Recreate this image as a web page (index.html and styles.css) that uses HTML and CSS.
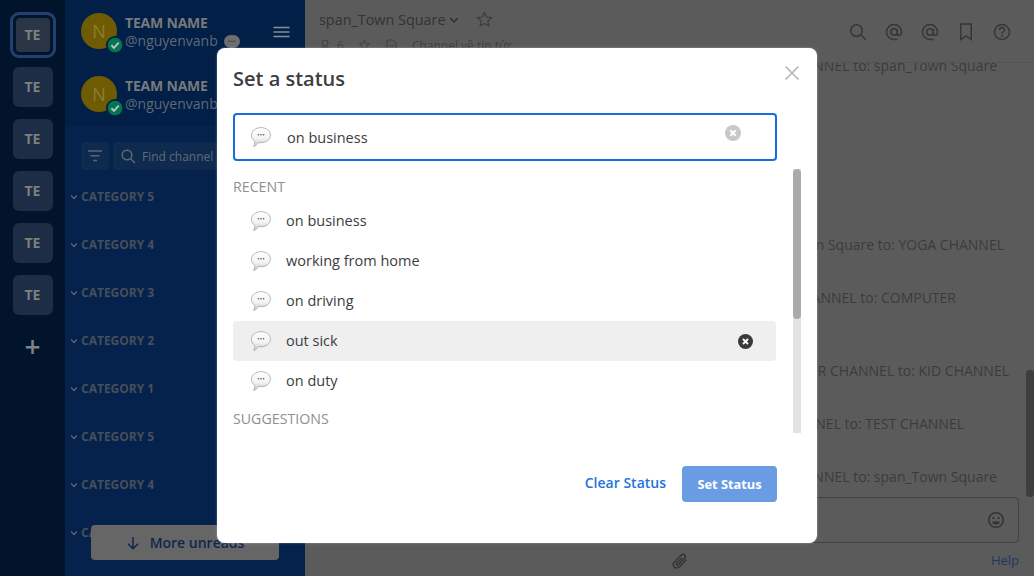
FILE: index.html
```html
<!DOCTYPE html>
<html lang="en">
<head>
<meta charset="utf-8">
<title>Set a status</title>
<link rel="stylesheet" href="styles.css">
</head>
<body>
<svg class="defs" width="0" height="0" aria-hidden="true">
  <defs>
    <linearGradient id="bub" x1="0" y1="0" x2="0" y2="1"><stop offset="0" stop-color="#fff"/><stop offset=".55" stop-color="#f4f4f4"/><stop offset="1" stop-color="#c4c4c4"/></linearGradient>
    <symbol id="bubble" viewBox="0 0 20 20">
      <path d="M10 .6c5.300 0 9.500 3.300 9.500 7.600s-4.200 7.600-9.500 7.600c-.9 0-1.700-.1-2.500-.3C6.400 17.400 4.500 19 2.600 19.500c.8-1.300 1.200-3 1.100-5C1.800 13.100.5 10.800.5 8.200.5 3.900 4.700.6 10 .6z" fill="url(#bub)" stroke="#a8a8a8" stroke-width=".8"/>
      <circle cx="7.400" cy="7.700" r=".8" fill="#555"/><circle cx="10" cy="7.700" r=".8" fill="#555"/><circle cx="12.600" cy="7.700" r=".8" fill="#555"/>
    </symbol>
    <symbol id="check" viewBox="0 0 16 16">
      <circle cx="8" cy="8" r="6.500" fill="#04764f"/>
      <path d="M4.800 8.200l2.300 2.300 4.200-4.600" fill="none" stroke="#b9c3c4" stroke-width="1.700"/>
    </symbol>
    <symbol id="chev" viewBox="0 0 8 8"><path d="M1 2.500l3 3 3-3" fill="none" stroke="currentColor" stroke-width="1.300"/></symbol>
    <symbol id="at" viewBox="0 0 18 18"><path d="M12.200 9a3.200 3.200 0 1 1-6.400 0 3.200 3.200 0 0 1 6.400 0zm0-3v4.400c0 1.200.8 1.900 1.900 1.900 1.500 0 2.400-1.500 2.400-3.300A7.500 7.500 0 1 0 9 16.500h3.500" fill="none" stroke="currentColor" stroke-width="1.500"/></symbol>
  </defs>
</svg>

<div class="app">
  <nav class="rail">
    <div class="team team-active"><span class="team-tile">TE</span></div>
    <div class="team"><span class="team-tile">TE</span></div>
    <div class="team"><span class="team-tile">TE</span></div>
    <div class="team"><span class="team-tile">TE</span></div>
    <div class="team"><span class="team-tile">TE</span></div>
    <div class="team"><span class="team-tile">TE</span></div>
    <div class="team-add">+</div>
  </nav>

  <aside class="sidebar">
    <header class="side-head">
      <div class="profile">
        <div class="avatar">N<svg class="badge"><use href="#check"/></svg></div>
        <div class="who">
          <div class="team-name">TEAM NAME</div>
          <div class="handle">@nguyenvanb <span class="status-dot">···</span></div>
        </div>
        <svg class="burger" width="18" height="12" viewBox="0 0 18 12"><path d="M.5 1.500h16M.5 6h16M.5 10.500h16" stroke="#8b8f93" stroke-width="1.500"/></svg>
      </div>
      <div class="profile">
        <div class="avatar">N<svg class="badge"><use href="#check"/></svg></div>
        <div class="who">
          <div class="team-name">TEAM NAME</div>
          <div class="handle">@nguyenvanb</div>
        </div>
      </div>
    </header>
    <div class="tools">
      <div class="filter"><svg width="16" height="12" viewBox="0 0 16 12"><path d="M1 1h14M3.500 5.800h9M6 10.500h4" stroke="#5b6573" stroke-width="1.400"/></svg></div>
      <div class="find"><svg width="15" height="15" viewBox="0 0 15 15"><circle cx="6" cy="6" r="4.800" fill="none" stroke="#5f6873" stroke-width="1.500"/><path d="M9.500 9.500l4.500 4.500" stroke="#5f6873" stroke-width="1.500"/></svg><span>Find channel</span></div>
    </div>
    <ul class="cats">
      <li class="cat"><svg class="cat-chev"><use href="#chev"/></svg>CATEGORY 5</li>
      <li class="cat"><svg class="cat-chev"><use href="#chev"/></svg>CATEGORY 4</li>
      <li class="cat"><svg class="cat-chev"><use href="#chev"/></svg>CATEGORY 3</li>
      <li class="cat"><svg class="cat-chev"><use href="#chev"/></svg>CATEGORY 2</li>
      <li class="cat"><svg class="cat-chev"><use href="#chev"/></svg>CATEGORY 1</li>
      <li class="cat"><svg class="cat-chev"><use href="#chev"/></svg>CATEGORY 5</li>
      <li class="cat"><svg class="cat-chev"><use href="#chev"/></svg>CATEGORY 4</li>
      <li class="cat"><svg class="cat-chev"><use href="#chev"/></svg>CATEGORY 3</li>
    </ul>
    <div class="more"><svg width="14" height="14" viewBox="0 0 14 14"><path d="M7 1v11.500M2 7.800l5 5 5-5" fill="none" stroke="#10264d" stroke-width="1.500"/></svg><span>More unreads</span></div>
  </aside>

  <main class="center">
    <header class="chan-head">
      <div class="chan-info">
        <div class="chan-title">
          <span>span_Town Square</span>
          <svg class="chan-chev"><use href="#chev"/></svg>
          <svg class="chan-star" width="17" height="17" viewBox="0 0 17 17"><path d="M8.500 1.500l2.100 4.500 4.900.6-3.600 3.400.9 4.900-4.300-2.400-4.300 2.400.9-4.900L1.500 6.600l4.900-.6z" fill="none" stroke="#3c3c3c" stroke-width="1.200"/></svg>
        </div>
        <div class="chan-sub">
          <svg width="12" height="13" viewBox="0 0 12 13"><circle cx="6" cy="4" r="3" fill="none" stroke="#3f3f3f"/><path d="M1 12c0-3 2-4 5-4s5 1 5 4z" fill="none" stroke="#3f3f3f"/></svg>
          <span class="count">6</span>
          <svg class="sub-pin" width="13" height="13" viewBox="0 0 13 13"><path d="M6.500 1l1.500 3.500 3.500.4-2.600 2.400.7 3.700-3.100-1.900-3.100 1.900.7-3.700L1.500 4.900 5 4.500z" fill="none" stroke="#3f3f3f"/></svg>
          <svg class="sub-doc" width="11" height="13" viewBox="0 0 11 13"><path d="M1 1h6l3 3v8H1zM3 7h5M3 9.500h5" fill="none" stroke="#3f3f3f"/></svg>
          <span class="purpose">Channel về tin tức</span>
        </div>
      </div>
      <div class="chan-icons">
        <svg width="18" height="18" viewBox="0 0 18 18"><circle cx="7.500" cy="7.500" r="5.800" fill="none" stroke="currentColor" stroke-width="1.500"/><path d="M11.800 11.800l5 5" stroke="currentColor" stroke-width="1.500"/></svg>
        <svg width="18" height="18"><use href="#at"/></svg>
        <svg width="18" height="18"><use href="#at"/></svg>
        <svg width="18" height="18" viewBox="0 0 18 18"><path d="M3.800 1h10.400v15.500L9 12.800l-5.200 3.700z" fill="none" stroke="currentColor" stroke-width="1.500"/></svg>
        <svg width="18" height="18" viewBox="0 0 18 18"><circle cx="9" cy="9" r="7.500" fill="none" stroke="currentColor" stroke-width="1.500"/><path d="M6.500 7c0-1.600 1.100-2.500 2.500-2.500s2.500.9 2.500 2.300c0 1.900-2.500 2-2.500 3.900" fill="none" stroke="currentColor" stroke-width="1.500"/><circle cx="9" cy="13" r="1" fill="currentColor"/></svg>
      </div>
    </header>
    <div class="posts">
      <div class="scroll-thumb"></div>
      <p class="post p1">YOGA CHANNEL to: span_Town Square</p>
      <p class="post p2">span_Town Square to: YOGA CHANNEL</p>
      <p class="post p3">YOGA CHANNEL to: COMPUTER</p>
      <p class="post p4">COMPUTER CHANNEL to: KID CHANNEL</p>
      <p class="post p5">KID CHANNEL to: TEST CHANNEL</p>
      <p class="post p6">CHANNEL to: span_Town Square</p>
    </div>
    <div class="composer">
      <svg width="18" height="18" viewBox="0 0 18 18"><circle cx="9" cy="9" r="7.300" fill="none" stroke="#333" stroke-width="1.500"/><circle cx="6.300" cy="7" r="1.100" fill="#333"/><circle cx="11.700" cy="7" r="1.100" fill="#333"/><path d="M5 10.500h8c-.5 2-2 3-4 3s-3.500-1-4-3z" fill="#333"/></svg>
    </div>
    <div class="under">
      <svg class="clip" width="18" height="18" viewBox="0 0 18 18"><path d="M15.500 7.500l-7 7.200c-1.600 1.600-4 1.600-5.300.2-1.400-1.400-1.300-3.500.2-5l6.800-6.800c1-1 2.500-1 3.400-.1.900.9.900 2.400-.1 3.400l-6.300 6.300c-.5.500-1.200.5-1.600.1-.4-.4-.4-1.100.1-1.600l5.500-5.500" fill="none" stroke="#333" stroke-width="1.400"/></svg>
      <span class="help">Help</span>
    </div>
  </main>
</div>

<div class="overlay">
  <section class="modal">
    <header class="modal-head">
      <h1>Set a status</h1>
      <svg class="close" width="16" height="16" viewBox="0 0 16 16"><path d="M1.500 1.500l13 13M14.500 1.500l-13 13" stroke="#b5b5b5" stroke-width="1.600"/></svg>
    </header>
    <div class="field">
      <svg class="emoji"><use href="#bubble"/></svg>
      <span class="field-text">on business</span>
      <svg class="clear clear-field" viewBox="0 0 16 16"><circle cx="8" cy="8" r="8" fill="#c8c8c8"/><path d="M5.300 5.300l5.400 5.400M10.700 5.300l-5.400 5.400" stroke="#fff" stroke-width="2"/></svg>
    </div>
    <div class="list-wrap">
      <div class="list">
        <div class="group">Recent</div>
        <div class="row"><svg class="emoji"><use href="#bubble"/></svg><span>on business</span></div>
        <div class="row"><svg class="emoji"><use href="#bubble"/></svg><span>working from home</span></div>
        <div class="row"><svg class="emoji"><use href="#bubble"/></svg><span>on driving</span></div>
        <div class="row row-hover"><svg class="emoji"><use href="#bubble"/></svg><span>out sick</span><svg class="clear clear-row" viewBox="0 0 16 16"><circle cx="8" cy="8" r="8" fill="#3a3a3c"/><path d="M5.300 5.300l5.400 5.400M10.700 5.300l-5.400 5.400" stroke="#fff" stroke-width="2"/></svg></div>
        <div class="row"><svg class="emoji"><use href="#bubble"/></svg><span>on duty</span></div>
        <div class="group group-next">Suggestions</div>
      </div>
      <div class="track"><div class="thumb"></div></div>
    </div>
    <footer class="modal-foot">
      <span class="link">Clear Status</span>
      <span class="btn">Set Status</span>
    </footer>
  </section>
</div>
</body>
</html>
```

FILE: styles.css
```css
* { box-sizing: border-box; }
html, body { margin: 0; height: 100%; overflow: hidden; }
body { font-family: "Open Sans", "Liberation Sans", sans-serif; font-size: 14px; color: #3a3a3a; background: #5b5b5b; position: relative; }
.defs { position: absolute; }
.app { display: flex; width: 1034px; height: 576px; }

/* team rail */
.rail { width: 65px; flex: none; background: #02142b; display: flex; flex-direction: column; align-items: center; padding-top: 15px; gap: 12px; }
.team { width: 40px; height: 40px; display: flex; align-items: center; justify-content: center; position: relative; }
.team-tile { width: 40px; height: 40px; padding-bottom: 2px; background: #1d2d45; border-radius: 6px; color: #7f7f7c; font-weight: 700; font-size: 14px; display: flex; align-items: center; justify-content: center; }
.team-active { width: 46px; height: 46px; margin: -3px 0; border: 3px solid #21426e; border-radius: 9px; }
.team-active .team-tile { width: 34px; height: 34px; background: #2a3645; border-radius: 4px; }
.team-add { color: #7c838d; font-size: 28px; line-height: 36px; font-weight: 600; margin-top: 1px; }

/* sidebar */
.sidebar { width: 240px; flex: none; background: #04224b; position: relative; display: flex; flex-direction: column; }
.side-head { height: 126px; background: #021f47; padding: 13px 0 0 16px; display: flex; flex-direction: column; gap: 27px; }
.profile { display: flex; align-items: flex-start; height: 36px; position: relative; }
.avatar { width: 36px; height: 36px; border-radius: 50%; background: #6f5b02; color: #8d7c31; font-size: 18px; display: flex; align-items: center; justify-content: center; position: relative; flex: none; }
.badge { position: absolute; right: -7px; bottom: -5px; width: 18px; height: 18px; background: #021f47; border-radius: 50%; }
.who { margin-left: 8px; white-space: nowrap; }
.team-name { color: #77797c; font-weight: 700; font-size: 14px; line-height: 20px; letter-spacing: -.2px; }
.handle { color: #5f6a78; font-size: 14px; line-height: 20px; margin-top: -2px; display: flex; align-items: center; gap: 6px; }
.status-dot { width: 16px; height: 13px; border-radius: 8px; background: #6e6e6e; color: #333; font-size: 9px; line-height: 12px; text-align: center; display: inline-block; font-weight: 700; }
.burger { position: absolute; left: 192px; top: 13px; }
.tools { display: flex; gap: 4px; padding: 16px 0 0 16px; height: 44px; }
.filter { width: 28px; height: 28px; background: #0f2a4f; border-radius: 4px; display: flex; align-items: center; justify-content: center; }
.find { width: 130px; height: 28px; background: #0f2a4f; border-radius: 4px; display: flex; align-items: center; gap: 6px; padding-left: 8px; color: #606a76; font-size: 12px; white-space: nowrap; }
.cats { list-style: none; margin: 15px 0 0; padding: 0; }
.cat { height: 48px; line-height: 24px; padding-left: 5px; color: #474f5b; font-size: 12px; font-weight: 700; display: flex; align-items: flex-start; gap: 3px; white-space: nowrap; }
.cat-chev { width: 8px; height: 8px; color: #5b6573; margin-top: 8px; flex: none; }
.more { position: absolute; left: 26px; top: 525px; width: 188px; height: 35px; background: #666; border-radius: 4px; display: flex; align-items: center; justify-content: center; gap: 10px; color: #10264d; font-size: 14px; font-weight: 600; }

/* center */
.center { flex: 1; min-width: 0; background: #5b5b5b; display: flex; flex-direction: column; position: relative; }
.chan-head { height: 63px; border-bottom: 1px solid #535353; display: flex; justify-content: space-between; padding: 9px 23px 0 14px; flex: none; }
.chan-title { display: flex; align-items: center; height: 21px; font-size: 14.4px; color: #333; white-space: nowrap; }
.chan-chev { width: 10px; height: 10px; margin-left: 3px; color: #333; }
.chan-star { margin-left: 17px; }
.chan-sub { display: flex; align-items: center; height: 20px; margin-top: 5px; color: #3f3f3f; font-size: 12px; white-space: nowrap; }
.count { margin-left: 6px; }
.sub-pin { margin-left: 14px; }
.sub-doc { margin-left: 15px; }
.purpose { margin-left: 15px; }
.chan-icons { display: flex; gap: 18px; color: #363636; padding-top: 14px; }
.posts { flex: 1; min-height: 0; position: relative; overflow: hidden; }
.post { margin: 0; font-size: 14px; line-height: 20px; color: #3b3b3b; white-space: nowrap; text-align: right; }
.p1 { padding-right: 37px; margin-top: -7px; }
.p2 { padding-right: 30px; margin-top: 159px; }
.p3 { padding-right: 78px; margin-top: 33px; }
.p4 { padding-right: 25px; margin-top: 53px; }
.p5 { padding-right: 70px; margin-top: 33px; }
.p6 { padding-right: 37px; margin-top: 33px; }
.scroll-thumb { position: absolute; right: 0; top: 307px; width: 8px; height: 127px; background: #3e3e3e; border-radius: 4px; }
.composer { position: absolute; left: 320px; top: 497px; width: 394px; height: 46px; border: 1px solid #424242; border-radius: 4px; display: flex; align-items: center; justify-content: flex-end; padding-right: 13px; }
.under { height: 33px; flex: none; position: relative; }
.clip { position: absolute; left: 366px; top: 9px; }
.help { position: absolute; right: 15px; top: 8px; color: #1e3762; font-size: 13px; }

/* modal */
.overlay { position: absolute; inset: 0; display: flex; justify-content: center; align-items: flex-start; padding-top: 48px; }
.modal { width: 600px; height: 495px; background: #fff; border-radius: 8px; padding: 0 16px; display: flex; flex-direction: column; box-shadow: 0 0 2px rgba(255,255,255,.5); }
.modal-head { height: 65px; display: flex; align-items: flex-start; justify-content: space-between; padding-top: 17px; flex: none; }
h1 { margin: 0; font-size: 20px; line-height: 28px; font-weight: 600; color: #3d3c40; }
.close { margin: 0 1px 0 0; }
.field { width: 544px; height: 48px; border: 2px solid #166de0; border-radius: 4px; display: flex; align-items: center; padding-left: 16px; position: relative; flex: none; }
.emoji { width: 20px; height: 20px; flex: none; }
.field-text { margin-left: 16px; font-size: 14.5px; color: #3d3c40; }
.clear { width: 16px; height: 16px; position: absolute; }
.clear-field { left: 490px; top: 10px; }
.list-wrap { display: flex; height: 264px; margin-top: 8px; flex: none; }
.list { width: 543px; overflow: hidden; flex: none; padding-top: 8px; }
.group { height: 20px; line-height: 20px; font-size: 14.2px; color: #8f8f8f; text-transform: uppercase; }
.group-next { margin-top: 8px; }
.row { height: 40px; display: flex; align-items: center; padding-left: 18px; gap: 15px; font-size: 14.5px; color: #3d3c40; position: relative; border-radius: 4px; }
.row span { padding-bottom: 2px; }
.row-hover { background: #efefef; }
.clear-row { left: 505px; top: 13px; width: 15px; height: 15px; }
.list .row:nth-child(2) { margin-top: 4px; }
.track { width: 8px; margin-left: 17px; background: #e3e3e3; flex: none; height: 264px; }
.thumb { width: 8px; height: 150px; background: #aaa; border-radius: 4px; }
.modal-foot { display: flex; justify-content: flex-end; align-items: flex-start; margin-top: 33px; margin-right: 24px; gap: 16px; }
.link { color: #2572dd; font-weight: 600; font-size: 14px; line-height: 34px; }
.btn { width: 95px; height: 36px; background: #6a9ce4; color: #fff; font-size: 12.8px; font-weight: 700; border-radius: 4px; display: flex; align-items: center; justify-content: center; }
```
